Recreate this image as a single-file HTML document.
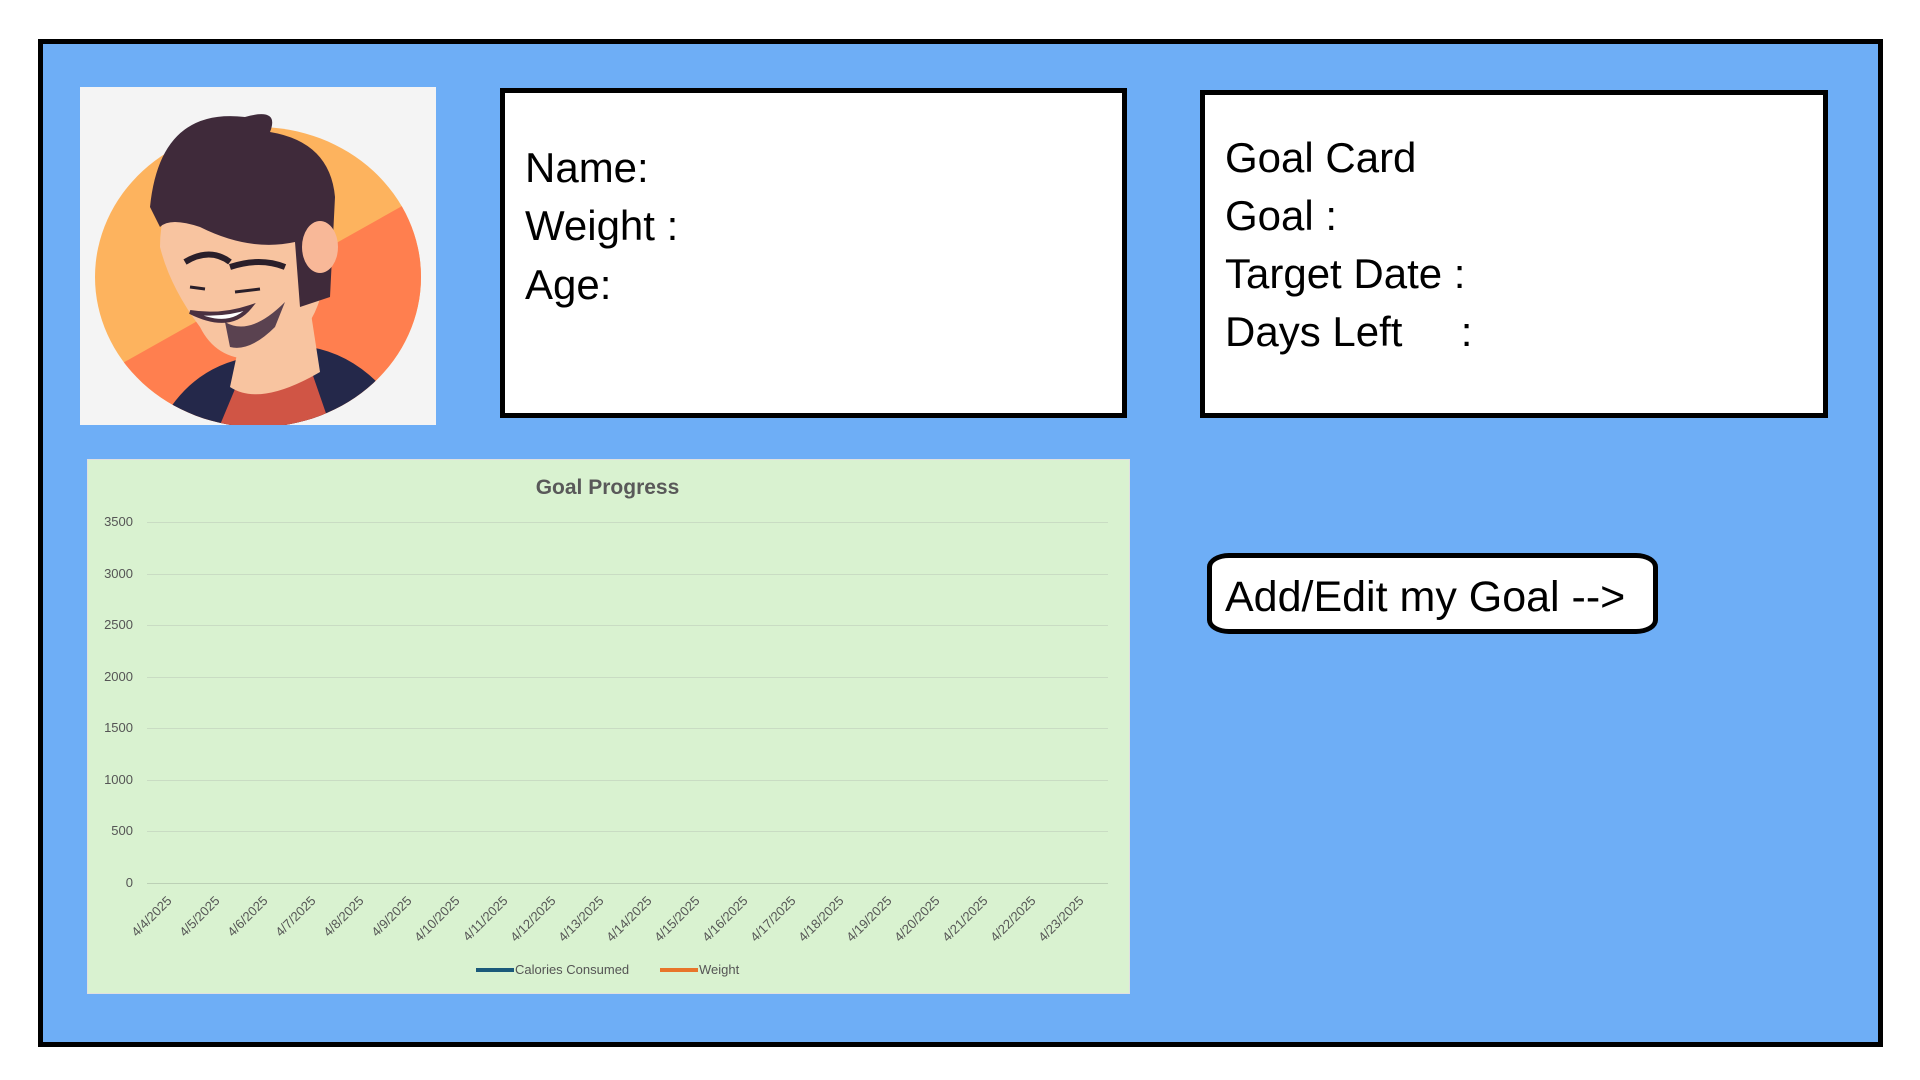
<!DOCTYPE html>
<html><head><meta charset="utf-8"><style>
body{margin:0;width:1920px;height:1080px;background:#fff;position:relative;overflow:hidden;font-family:"Liberation Sans",sans-serif}
.outer{position:absolute;left:38px;top:39px;width:1835px;height:998px;border:5px solid #000;background:#6eaef6}
.card{position:absolute;background:#fff;border:5px solid #000;box-sizing:border-box}
.t{position:absolute;font-size:42px;color:#000;white-space:pre;line-height:1}
.yl{position:absolute;font-size:13px;color:#555;text-align:right;width:50px}
.xl{position:absolute;font-size:13px;color:#555;transform:rotate(-45deg);transform-origin:right top;white-space:nowrap;text-align:right;width:80px}
.g{position:absolute;left:147px;width:961px;height:1px;background:#c9dcc3}
</style></head><body>
<div class="outer"></div>
<div style="position:absolute;left:80px;top:87px;width:356px;height:338px;background:#f4f4f4;overflow:hidden">
<svg width="356" height="338" viewBox="0 0 356 338">
<defs><clipPath id="c"><ellipse cx="178" cy="190" rx="163" ry="150"/></clipPath></defs>
<g clip-path="url(#c)">
<rect x="0" y="0" width="356" height="338" fill="#fdb35e"/>
<polygon points="0,300 356,100 356,338 0,338" fill="#ff7f4f"/>
<path d="M80 338 Q110 280 170 270 L230 260 Q290 270 330 338Z" fill="#24284a"/>
<path d="M140 338 L160 290 L230 280 L250 338Z" fill="#d05545"/>
<path d="M150 300 Q180 320 240 285 L230 220 L165 230Z" fill="#f8c4a0"/>
</g>
<path d="M80 160 Q80 80 160 70 Q240 75 245 160 Q250 240 190 270 Q140 280 120 240 Q90 200 80 160Z" fill="#f8c4a0"/>
<path d="M145 235 Q170 250 205 215 L195 240 Q170 265 150 260Z" fill="#5a4250"/>
<path d="M70 120 Q80 20 165 30 Q200 20 190 45 Q250 55 255 110 L250 210 L220 220 L215 155 Q170 165 120 140 Q90 130 80 140Z" fill="#3f2a3a"/>
<ellipse cx="240" cy="160" rx="18" ry="26" fill="#f8b898"/>
<path d="M105 175 Q130 160 150 175 M150 180 Q180 170 205 180" stroke="#2a1f2a" stroke-width="6" fill="none"/>
<path d="M110 200 L125 202 M155 205 L180 202" stroke="#2a1f2a" stroke-width="3"/>
<path d="M110 225 Q150 245 170 220 Q140 230 110 225Z" fill="#fff" stroke="#4a3040" stroke-width="4"/>
</svg></div>
<div class="card" style="left:500px;top:88px;width:627px;height:330px"></div>
<div class="t" style="left:525px;top:147px">Name:</div>
<div class="t" style="left:525px;top:205px">Weight :</div>
<div class="t" style="left:525px;top:264px">Age:</div>
<div class="card" style="left:1200px;top:90px;width:628px;height:328px"></div>
<div class="t" style="left:1225px;top:137px">Goal Card</div>
<div class="t" style="left:1225px;top:195px">Goal :</div>
<div class="t" style="left:1225px;top:253px">Target Date :</div>
<div class="t" style="left:1225px;top:311px">Days Left     :</div>
<div style="position:absolute;left:1207px;top:553px;width:451px;height:81px;box-sizing:border-box;border:5px solid #000;border-radius:22px/14px;background:#fff"></div>
<div class="t" style="left:1225px;top:576px;font-size:43px">Add/Edit my Goal --&gt;</div>
<div style="position:absolute;left:87px;top:459px;width:1041px;height:533px;background:#d9f2d0;border:1px solid #e0e0e0"></div>
<div style="position:absolute;left:87px;top:476px;width:1041px;text-align:center;font-size:21px;font-weight:bold;color:#595959">Goal Progress</div>
<div class="g" style="top:522px"></div><div class="g" style="top:574px"></div><div class="g" style="top:625px"></div><div class="g" style="top:677px"></div><div class="g" style="top:728px"></div><div class="g" style="top:780px"></div><div class="g" style="top:831px"></div><div class="g" style="top:883px;background:#bcd0b6"></div>
<div class="yl" style="left:83px;top:514px">3500</div><div class="yl" style="left:83px;top:566px">3000</div><div class="yl" style="left:83px;top:617px">2500</div><div class="yl" style="left:83px;top:669px">2000</div><div class="yl" style="left:83px;top:720px">1500</div><div class="yl" style="left:83px;top:772px">1000</div><div class="yl" style="left:83px;top:823px">500</div><div class="yl" style="left:83px;top:875px">0</div>
<div style="position:absolute;left:476px;top:968px;width:38px;height:4px;background:#1b5a7a"></div>
<div style="position:absolute;left:515px;top:962px;font-size:13px;color:#555">Calories Consumed</div>
<div style="position:absolute;left:660px;top:968px;width:38px;height:4px;background:#e8752a"></div>
<div style="position:absolute;left:699px;top:962px;font-size:13px;color:#555">Weight</div>
<div class="xl" style="left:84px;top:893px">4/4/2025</div>
<div class="xl" style="left:132px;top:893px">4/5/2025</div>
<div class="xl" style="left:180px;top:893px">4/6/2025</div>
<div class="xl" style="left:228px;top:893px">4/7/2025</div>
<div class="xl" style="left:276px;top:893px">4/8/2025</div>
<div class="xl" style="left:324px;top:893px">4/9/2025</div>
<div class="xl" style="left:372px;top:893px">4/10/2025</div>
<div class="xl" style="left:420px;top:893px">4/11/2025</div>
<div class="xl" style="left:468px;top:893px">4/12/2025</div>
<div class="xl" style="left:516px;top:893px">4/13/2025</div>
<div class="xl" style="left:564px;top:893px">4/14/2025</div>
<div class="xl" style="left:612px;top:893px">4/15/2025</div>
<div class="xl" style="left:660px;top:893px">4/16/2025</div>
<div class="xl" style="left:708px;top:893px">4/17/2025</div>
<div class="xl" style="left:756px;top:893px">4/18/2025</div>
<div class="xl" style="left:804px;top:893px">4/19/2025</div>
<div class="xl" style="left:852px;top:893px">4/20/2025</div>
<div class="xl" style="left:900px;top:893px">4/21/2025</div>
<div class="xl" style="left:948px;top:893px">4/22/2025</div>
<div class="xl" style="left:996px;top:893px">4/23/2025</div>
</body></html>
